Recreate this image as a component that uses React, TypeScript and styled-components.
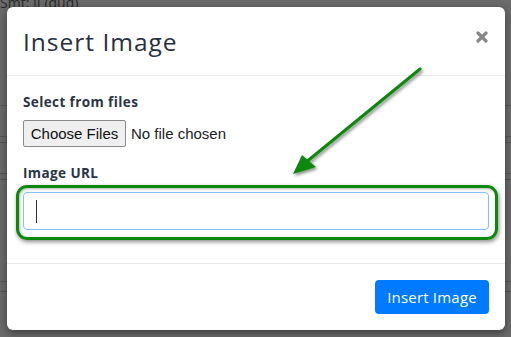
import React from "react";
import styled, { createGlobalStyle } from "styled-components";

const Global = createGlobalStyle`
  html, body { margin: 0; padding: 0; background: #6b6b6b; }
  * { box-sizing: border-box; }
`;

const Page = styled.div`
  position: relative;
  width: 511px;
  height: 337px;
  overflow: hidden;
  background: #6b6b6b;
  font-family: "Open Sans", "Liberation Sans", sans-serif;
`;

const BackList = styled.div`
  display: flex;
  flex-direction: column;
`;

const BackRow = styled.div<{ $h: number }>`
  height: ${(p) => p.$h}px;
  border-bottom: 1px solid #575757;
  overflow: hidden;
`;

const TopText = styled.div`
  margin-top: -4px;
  font-size: 14px;
  line-height: 14px;
  color: #2a2a2a;
  height: 12px;
  overflow: hidden;
  font-family: "Open Sans", sans-serif;
`;

const Modal = styled.div`
  position: absolute;
  left: 7px;
  top: 7px;
  width: 498px;
  height: 323px;
  background: #fff;
  border-radius: 6px;
  box-shadow: 0 3px 10px rgba(0, 0, 0, 0.45);
  display: flex;
  flex-direction: column;
`;

const Header = styled.div`
  display: flex;
  align-items: center;
  justify-content: space-between;
  padding: 16px 16px 15px 16px;
  border-bottom: 1px solid #e9ecef;
  height: 69px;
`;

const Title = styled.h5`
  margin: 0;
  font-size: 24.5px;
  font-weight: 500;
  color: #27303f;
  line-height: 36px;
  letter-spacing: 1px;
`;

const Close = styled.button`
  border: 0;
  background: none;
  padding: 0;
  margin-right: 1px;
  margin-top: -10px;
  width: 13px;
  height: 13px;
  display: flex;
  align-items: center;
  justify-content: center;
`;

const Body = styled.div`
  padding: 16px;
  display: flex;
  flex-direction: column;
`;

const Group = styled.div`
  display: flex;
  flex-direction: column;
  margin-bottom: 16px;
`;

const Label = styled.label`
  font-size: 13.5px;
  font-weight: 700;
  color: #2a3444;
  line-height: 20px;
  margin-bottom: 8px;
  letter-spacing: 0.4px;
`;

const FileRow = styled.div`
  display: flex;
  align-items: center;
  gap: 5px;
  height: 27px;
`;

const FileButton = styled.button`
  height: 27px;
  width: 103px;
  padding: 0;
  border: 1px solid #8a8a8a;
  border-radius: 2px;
  background: #efefef;
  color: #111;
  font-family: "Liberation Sans", Arial, sans-serif;
  font-size: 15px;
`;

const FileStatus = styled.span`
  font-family: "Liberation Sans", Arial, sans-serif;
  font-size: 15px;
  color: #222;
`;

const UrlField = styled.div`
  height: 38px;
  border: 1px solid #86bdfc;
  border-radius: 4px;
  display: flex;
  align-items: center;
  padding-left: 12px;
  margin-top: 1px;
`;

const Caret = styled.span`
  display: block;
  width: 1px;
  height: 23px;
  background: #333;
`;

const Footer = styled.div`
  margin-top: auto;
  border-top: 1px solid #e9ecef;
  padding: 16px;
  display: flex;
  justify-content: flex-end;
`;

const PrimaryButton = styled.button`
  height: 34px;
  width: 114px;
  border: 0;
  border-radius: 4px;
  background: #007bff;
  color: #fff;
  font-family: "Open Sans", sans-serif;
  font-size: 15px;
  font-weight: 500;
  letter-spacing: 0.2px;
`;

const Highlight = styled.div`
  position: absolute;
  left: 9px;
  top: 178px;
  width: 482px;
  height: 55px;
  border: 3px solid #0c880c;
  border-radius: 11px;
  box-shadow: 1px 2px 4px rgba(0, 0, 0, 0.45), inset 1px 1px 3px rgba(0, 0, 0, 0.3);
  pointer-events: none;
`;

const Annotation = styled.svg`
  position: absolute;
  left: 0;
  top: 0;
  pointer-events: none;
`;

export default function App() {
  return (
    <Page>
      <Global />
      <BackList>
        <TopText>Smt: II (dud)</TopText>
        <BackRow $h={98} />
        <BackRow $h={31} />
        <BackRow $h={6} />
        <BackRow $h={31} />
        <BackRow $h={6} />
        <BackRow $h={102} />
        <BackRow $h={10} />
      </BackList>
      <Modal>
        <Header>
          <Title>Insert Image</Title>
          <Close aria-label="close">
            <svg width="12" height="12" viewBox="0 0 12 12">
              <path d="M2 2 L10 10 M10 2 L2 10" stroke="#888" strokeWidth="3.2" strokeLinecap="round" />
            </svg>
          </Close>
        </Header>
        <Body>
          <Group>
            <Label>Select from files</Label>
            <FileRow>
              <FileButton>Choose Files</FileButton>
              <FileStatus>No file chosen</FileStatus>
            </FileRow>
          </Group>
          <Group>
            <Label>Image URL</Label>
            <UrlField>
              <Caret />
            </UrlField>
          </Group>
        </Body>
        <Footer>
          <PrimaryButton>Insert Image</PrimaryButton>
        </Footer>
        <Highlight />
      </Modal>
      <Annotation width="511" height="337" viewBox="0 0 511 337">
        <defs>
          <filter id="sh" x="-20%" y="-20%" width="140%" height="140%">
            <feDropShadow dx="1.5" dy="2" stdDeviation="1.5" floodColor="#000" floodOpacity="0.45" />
          </filter>
        </defs>
        <g filter="url(#sh)">
          <line x1="420" y1="69" x2="305" y2="163" stroke="#0c880c" strokeWidth="3" strokeLinecap="round" />
          <polygon points="293,174 302,155 316,167" fill="#0c880c" />
        </g>
      </Annotation>
    </Page>
  );
}
